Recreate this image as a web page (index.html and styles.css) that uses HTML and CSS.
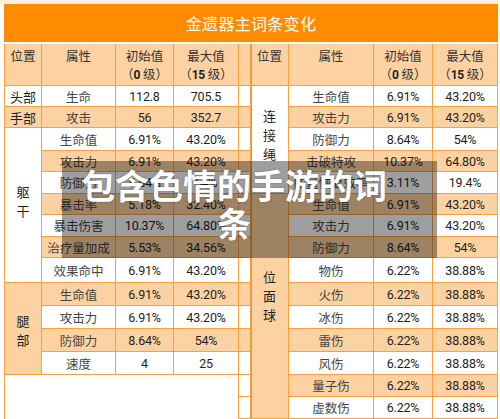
FILE: index.html
```html
<!DOCTYPE html>
<html lang="zh-CN">
<head>
    <meta charset="UTF-8">
    <meta name="viewport" content="width=device-width, initial-scale=1.0">
    <title>金遗器主词条变化</title>
    <link rel="stylesheet" href="styles.css">
</head>
<body>
    <div class="page">
        <div class="title-bar">金遗器主词条变化</div>

        <div class="sheet">
            <!-- header -->
            <div class="cell head">位置</div>
            <div class="cell head">属性</div>
            <div class="cell head">初始值<br>（<span class="num">0</span> 级）</div>
            <div class="cell head">最大值<br>（<span class="num">15</span> 级）</div>
            <div class="cell head"></div>
            <div class="cell head split">位置</div>
            <div class="cell head">属性</div>
            <div class="cell head">初始值<br>（<span class="num">0</span> 级）</div>
            <div class="cell head">最大值<br>（<span class="num">15</span> 级）</div>

            <!-- row 1 -->
            <div class="cell w pos">头部</div>
            <div class="cell w">生命</div>
            <div class="cell w num">112.8</div>
            <div class="cell w num">705.5</div>
            <div class="cell w"></div>
            <div class="cell w pos split grp grp-rope">连<br>接<br>绳</div>
            <div class="cell w">生命值</div>
            <div class="cell w num">6.91%</div>
            <div class="cell w num">43.20%</div>

            <!-- row 2 -->
            <div class="cell o pos">手部</div>
            <div class="cell o">攻击</div>
            <div class="cell o num">56</div>
            <div class="cell o num">352.7</div>
            <div class="cell o"></div>
            <div class="cell o">攻击力</div>
            <div class="cell o num">6.91%</div>
            <div class="cell o num">43.20%</div>

            <!-- row 3 -->
            <div class="cell w pos grp grp-body">躯<br>干</div>
            <div class="cell w">生命值</div>
            <div class="cell w num">6.91%</div>
            <div class="cell w num">43.20%</div>
            <div class="cell w"></div>
            <div class="cell w">防御力</div>
            <div class="cell w num">8.64%</div>
            <div class="cell w num">54%</div>

            <!-- row 4 -->
            <div class="cell o">攻击力</div>
            <div class="cell o num">6.91%</div>
            <div class="cell o num">43.20%</div>
            <div class="cell o"></div>
            <div class="cell o">击破特攻</div>
            <div class="cell o num">10.37%</div>
            <div class="cell o num">64.80%</div>

            <!-- row 5 -->
            <div class="cell w">防御力</div>
            <div class="cell w num">8.64%</div>
            <div class="cell w num">54%</div>
            <div class="cell w"></div>
            <div class="cell w">能量恢复效率</div>
            <div class="cell w num">3.11%</div>
            <div class="cell w num">19.4%</div>

            <!-- row 6 -->
            <div class="cell o">暴击率</div>
            <div class="cell o num">5.18%</div>
            <div class="cell o num">32.40%</div>
            <div class="cell o"></div>
            <div class="cell o pos split grp grp-orb">位<br>面<br>球</div>
            <div class="cell o">生命值</div>
            <div class="cell o num">6.91%</div>
            <div class="cell o num">43.20%</div>

            <!-- row 7 -->
            <div class="cell w">暴击伤害</div>
            <div class="cell w num">10.37%</div>
            <div class="cell w num">64.80%</div>
            <div class="cell w"></div>
            <div class="cell w">攻击力</div>
            <div class="cell w num">6.91%</div>
            <div class="cell w num">43.20%</div>

            <!-- row 8 -->
            <div class="cell o">治疗量加成</div>
            <div class="cell o num">5.53%</div>
            <div class="cell o num">34.56%</div>
            <div class="cell o"></div>
            <div class="cell o">防御力</div>
            <div class="cell o num">8.64%</div>
            <div class="cell o num">54%</div>

            <!-- row 9 -->
            <div class="cell w">效果命中</div>
            <div class="cell w num">6.91%</div>
            <div class="cell w num">43.20%</div>
            <div class="cell w"></div>
            <div class="cell w">物伤</div>
            <div class="cell w num">6.22%</div>
            <div class="cell w num">38.88%</div>

            <!-- row 10 -->
            <div class="cell o pos grp grp-leg">腿<br>部</div>
            <div class="cell o">生命值</div>
            <div class="cell o num">6.91%</div>
            <div class="cell o num">43.20%</div>
            <div class="cell o"></div>
            <div class="cell o">火伤</div>
            <div class="cell o num">6.22%</div>
            <div class="cell o num">38.88%</div>

            <!-- row 11 -->
            <div class="cell w">攻击力</div>
            <div class="cell w num">6.91%</div>
            <div class="cell w num">43.20%</div>
            <div class="cell w"></div>
            <div class="cell w">冰伤</div>
            <div class="cell w num">6.22%</div>
            <div class="cell w num">38.88%</div>

            <!-- row 12 -->
            <div class="cell o">防御力</div>
            <div class="cell o num">8.64%</div>
            <div class="cell o num">54%</div>
            <div class="cell o"></div>
            <div class="cell o">雷伤</div>
            <div class="cell o num">6.22%</div>
            <div class="cell o num">38.88%</div>

            <!-- row 13 -->
            <div class="cell w">速度</div>
            <div class="cell w num">4</div>
            <div class="cell w num">25</div>
            <div class="cell w"></div>
            <div class="cell w">风伤</div>
            <div class="cell w num">6.22%</div>
            <div class="cell w num">38.88%</div>

            <!-- row 14 -->
            <div class="cell w blank"></div>
            <div class="cell w"></div>
            <div class="cell o">量子伤</div>
            <div class="cell o num">6.22%</div>
            <div class="cell o num">38.88%</div>

            <!-- row 15 -->
            <div class="cell w"></div>
            <div class="cell w">虚数伤</div>
            <div class="cell w num">6.22%</div>
            <div class="cell w num">38.88%</div>
        </div>

        <div class="overlay">
            <div class="overlay-text">包含色情的手游的词条</div>
        </div>
    </div>
</body>
</html>
```

FILE: styles.css
```css
body {
    margin: 0;
    background-color: #ffffff;
    font-family: "Noto Sans CJK SC", sans-serif;
}

.page {
    position: relative;
    width: 494px;
    height: 419px;
    overflow: hidden;
    padding: 4px 2px 0 4px;
}

.page::before {
    content: "";
    position: absolute;
    left: 0;
    top: 0;
    right: 0;
    height: 4px;
    background-color: #fdeede;
}

.title-bar {
    height: 38px;
    background-color: #ff8b00;
    color: #ffffff;
    font-size: 16px;
    letter-spacing: 0.3px;
    display: flex;
    justify-content: center;
    align-items: center;
}

.sheet {
    margin-top: 2px;
    display: grid;
    grid-template-columns: 36px 73px 57px 64px 11px 37px 84px 58px 64px;
    grid-template-rows: 41px 20px 20px 22px 20px 21px 20px 21px 20px 24px 22px 22px 22px 22px 21px 21px;
    gap: 1px;
    background-color: #f7a13e;
    border-left: 1px solid #f7a13e;
    border-right: 1px solid #f7a13e;
}

.cell {
    display: flex;
    justify-content: center;
    align-items: center;
    text-align: center;
    font-size: 12.5px;
    color: #454545;
    white-space: nowrap;
}

.w {
    background-color: #ffffff;
}

.o {
    background-color: #fdd2a2;
}

.head {
    display: block;
    background-color: #fdd2a2;
    padding-top: 3px;
    line-height: 18px;
    color: #333333;
}

.num {
    font-family: "Roboto", "Liberation Sans", sans-serif;
    font-size: 12.5px;
    letter-spacing: -0.2px;
    color: #1e1e1e;
}

.head .num {
    font-weight: 700;
    font-size: 12px;
}

.pos {
    color: #1f1f1f;
    font-size: 13px;
}

.split {
    box-shadow: inset 1px 0 0 #f39026;
}

.grp {
    display: block;
    line-height: 19px;
}

.grp-rope {
    grid-row: span 5;
    padding-top: 20px;
}

.grp-orb {
    grid-row: span 10;
    padding-top: 73px;
}

.grp-body {
    grid-row: span 7;
    padding-top: 54px;
}

.grp-leg {
    grid-row: span 4;
    padding-top: 28px;
}

.blank {
    grid-column: span 4;
    grid-row: span 3;
}

.overlay {
    position: absolute;
    left: 62px;
    top: 161px;
    width: 375px;
    height: 97px;
    background-color: rgba(0, 0, 0, 0.38);
}

.overlay-text {
    width: 330px;
    margin: 5px 0 0 7px;
    font-size: 34px;
    line-height: 38px;
    font-weight: 700;
    color: #ffffff;
    text-align: center;
    text-shadow: 0 0 2px rgba(0, 0, 0, 0.35);
}
```
